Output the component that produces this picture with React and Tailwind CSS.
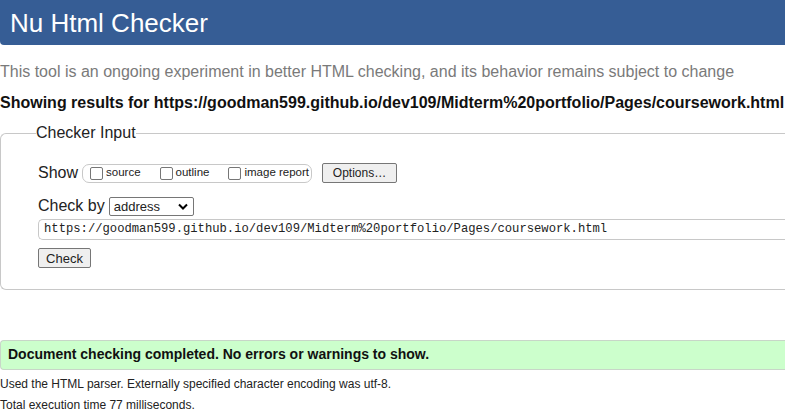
import React from "react";

const URL =
  "https://goodman599.github.io/dev109/Midterm%20portfolio/Pages/coursework.html";

const ShowOption = ({ label }) => (
  <label className="flex items-center gap-[3px] text-[11.5px] text-[#222]">
    <span className="w-[13px] h-[13px] border border-[#767676] rounded-[2px] bg-white" />
    <span>{label}</span>
  </label>
);

const App = () => {
  return (
    <div
      className="w-[785px] h-[420px] overflow-hidden bg-white text-[#222]"
      style={{ fontFamily: '"Liberation Sans", Arial, sans-serif' }}
    >
      <div className="h-[45px] bg-[#365d95] rounded-bl-[4px] pl-[10px] flex items-center">
        <h1 className="text-[26px] leading-none text-white font-normal mt-[1px]">
          Nu Html Checker
        </h1>
      </div>

      <p className="mt-[18px] text-[16px] leading-[18px] text-[#7a7a7a] whitespace-nowrap">
        This tool is an ongoing experiment in better HTML checking, and its
        behavior remains subject to change
      </p>
      <p className="mt-[13px] text-[16px] leading-[18px] font-bold text-[#111] whitespace-nowrap">
        Showing results for {URL}
      </p>

      <fieldset className="mt-[12px] w-[800px] border border-r-0 border-[#c8c8c8] rounded-l-[6px] pl-[37px] pb-[19px]">
        <legend className="text-[16px] leading-[18px] -ml-[2px] text-[#222]">
          Checker Input
        </legend>

        <div className="mt-[21px] h-[20px] flex items-center">
          <span className="text-[16px]">Show</span>
          <div className="ml-[4px] h-[19px] w-[230px] border border-[#c8c8c8] rounded-[7px] flex items-center pl-[7px] gap-[19px]">
            <ShowOption label="source" />
            <ShowOption label="outline" />
            <ShowOption label="image report" />
          </div>
          <button className="ml-[10px] h-[20px] w-[75px] bg-[#efefef] border border-[#767676] rounded-[2px] text-[12px] leading-none">
            Options…
          </button>
        </div>

        <div className="mt-[13px] h-[20px] flex items-center">
          <span className="text-[16px]">Check by</span>
          <div className="ml-[4px] mt-[1px] h-[19px] w-[85px] border border-[#767676] rounded-[2px] flex items-center justify-between pl-[4px] pr-[5px]">
            <span className="text-[13px] leading-none">address</span>
            <svg width="10" height="7" viewBox="0 0 10 7">
              <path
                d="M1 1.5 L5 5.5 L9 1.5"
                fill="none"
                stroke="#000"
                strokeWidth="2"
              />
            </svg>
          </div>
        </div>

        <div
          className="mt-[3px] h-[21px] border border-r-0 border-[#c8c8c8] rounded-l-[5px] flex items-center pl-[5px] text-[12.2px] whitespace-nowrap"
          style={{ fontFamily: '"Liberation Mono", "DejaVu Sans Mono", monospace' }}
        >
          {URL}
        </div>

        <button className="mt-[8px] h-[20px] w-[53px] bg-[#efefef] border border-[#767676] rounded-[2px] text-[13px] leading-none">
          Check
        </button>
      </fieldset>

      <div className="mt-[50px] w-[800px] h-[30px] bg-[#ccffcc] border border-r-0 border-[#c8d6c8] rounded-l-[4px] flex items-center pl-[7px]">
        <p className="text-[14px] font-bold text-[#111]">
          Document checking completed. No errors or warnings to show.
        </p>
      </div>

      <p className="mt-[7px] text-[12px] leading-[14px] text-[#222]">
        Used the HTML parser. Externally specified character encoding was
        utf-8.
      </p>
      <p className="mt-[7px] text-[12px] leading-[14px] text-[#222]">
        Total execution time 77 milliseconds.
      </p>
    </div>
  );
};

export default App;
